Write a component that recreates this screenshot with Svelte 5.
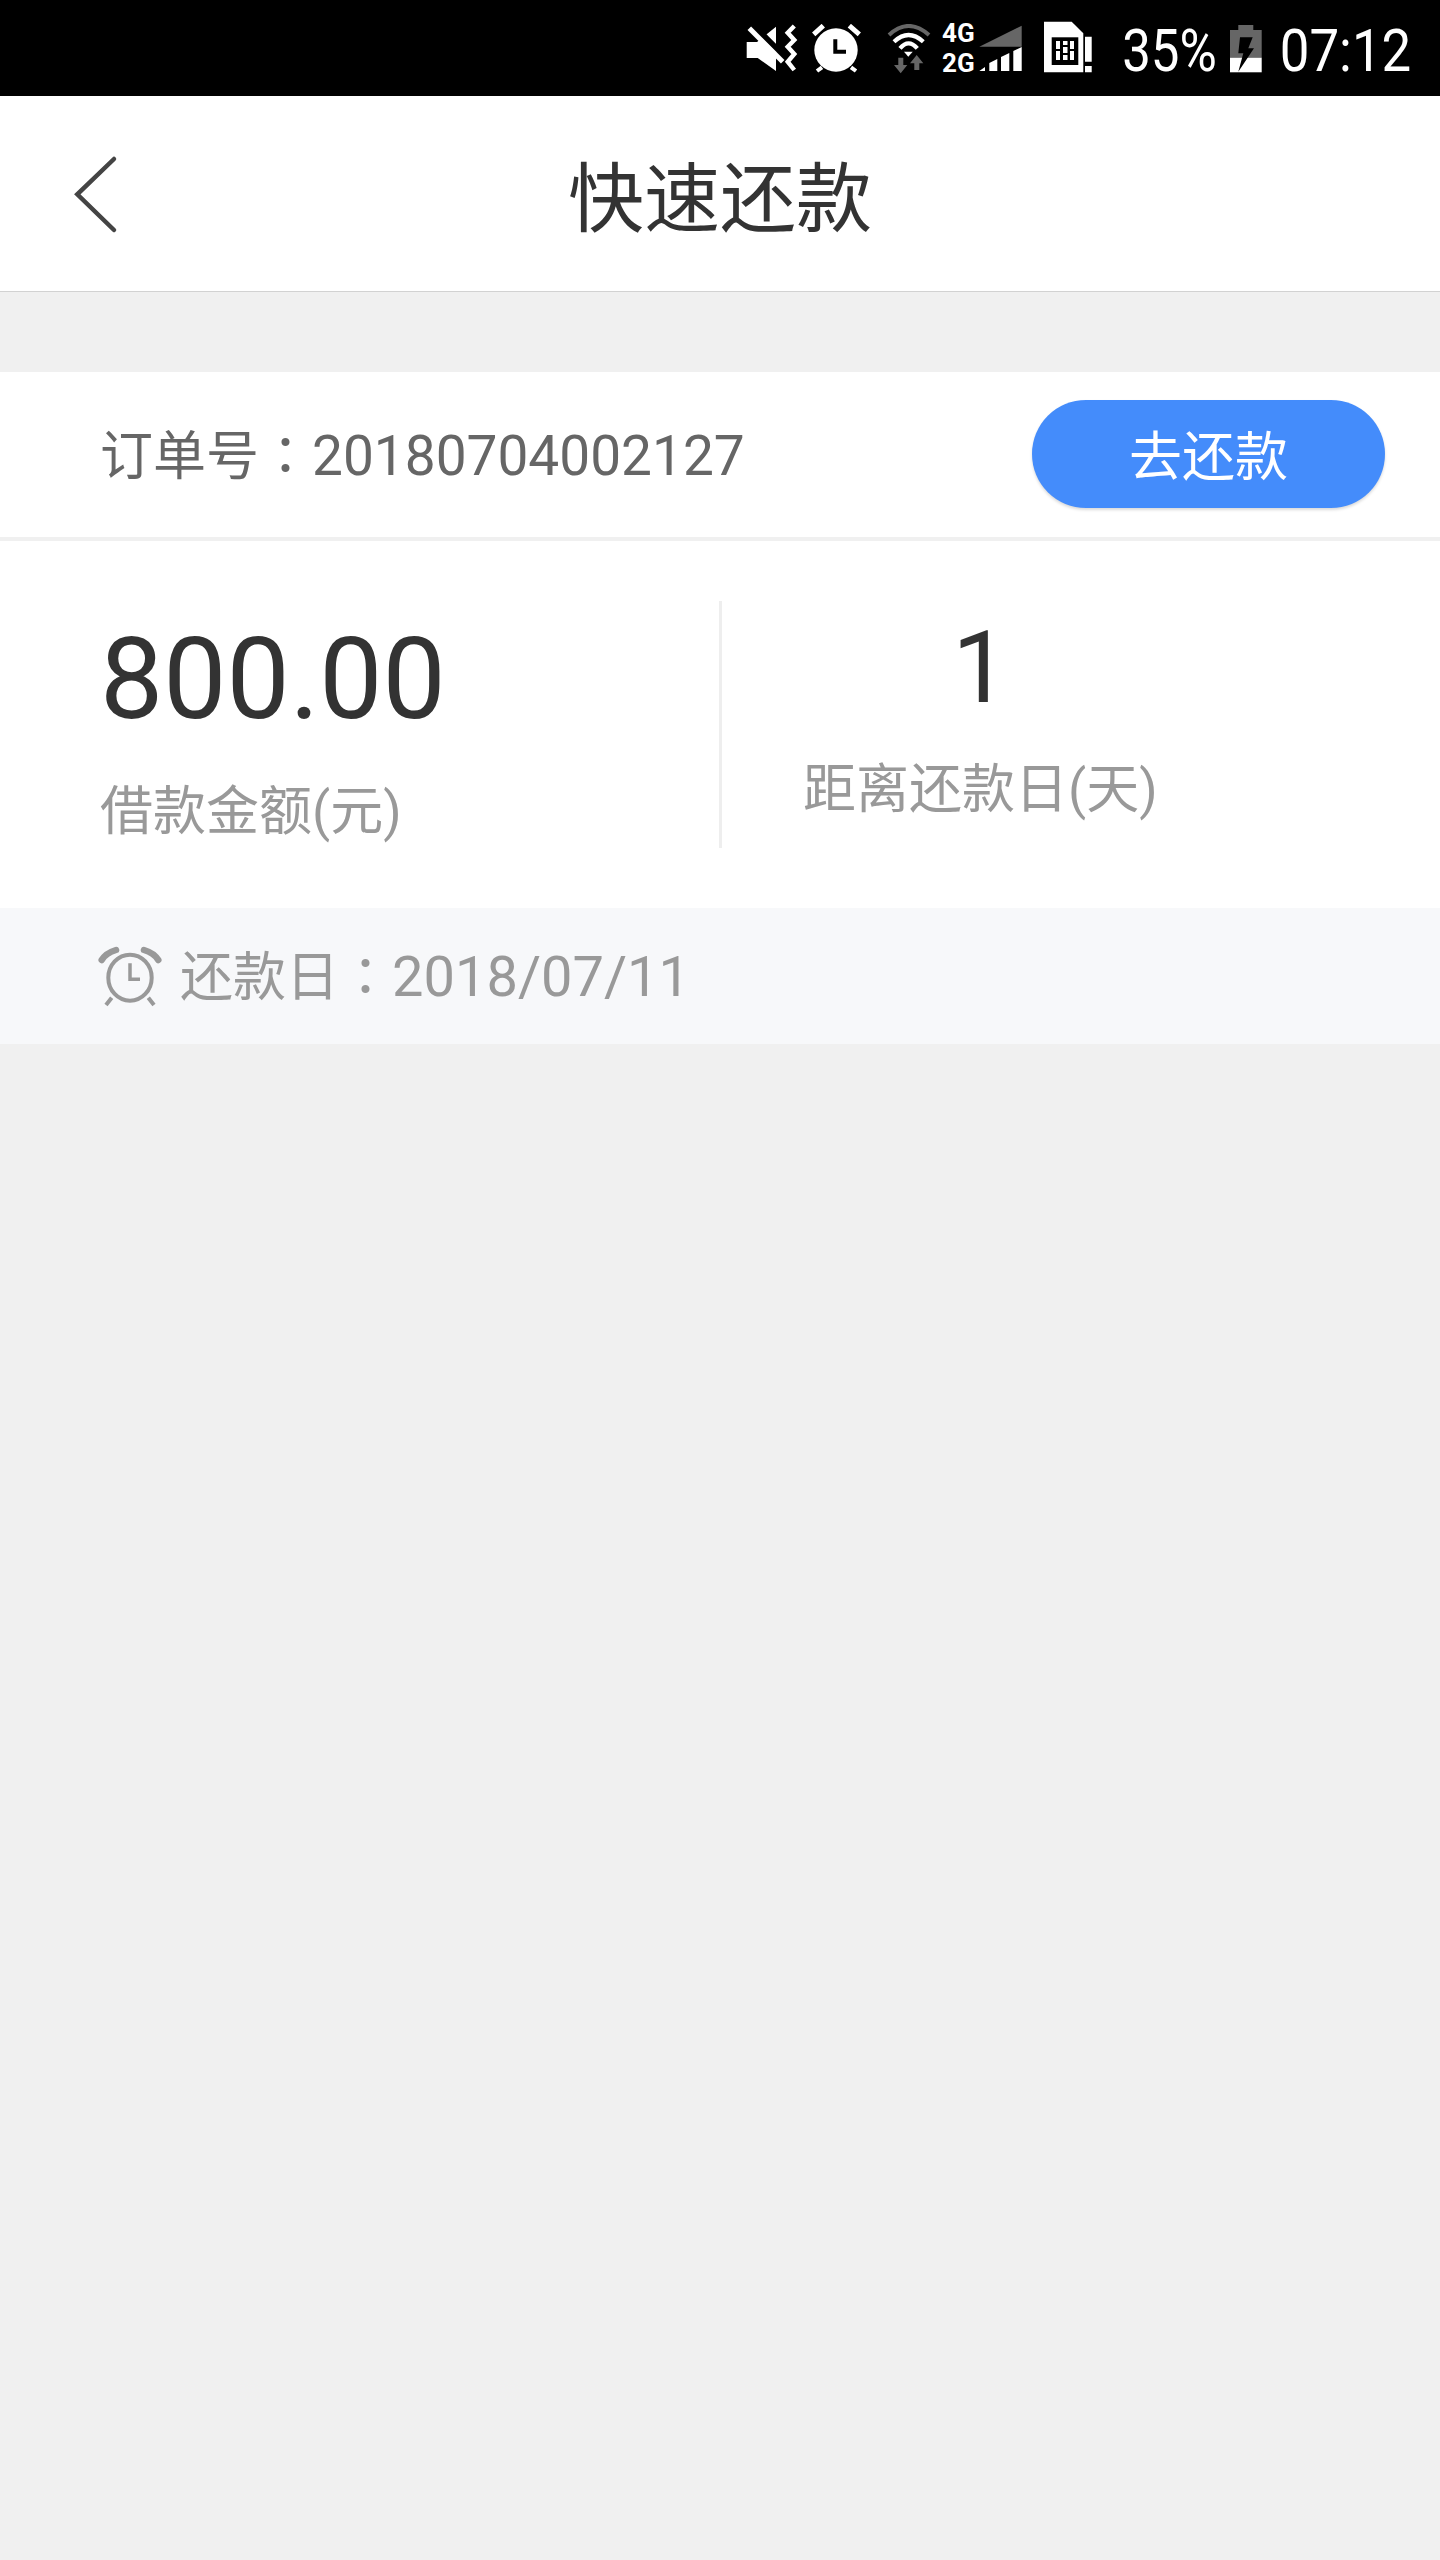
<script>
    let orderNo = '20180704002127';
    let amount = '800.00';
    let daysLeft = 1;
    let dueDate = '2018/07/11';
</script>

<div class="page">
    <div class="statusbar">
        <!-- mute + vibrate -->
        <svg class="ic mute" width="52" height="50" viewBox="0 0 52 50">
            <path d="M.7 18H11L30 2.700V47L11.700 34H.7z" fill="#fff"/>
            <path d="M7 1l33 33" stroke="#000" stroke-width="6"/>
            <path d="M3.300 4.300L36.700 37.700" stroke="#fff" stroke-width="5"/>
            <path d="M48.300 2l-6.600 6.700 6.600 7.300-6.600 6.700 6.600 7.300-6.600 7.700 6.600 8.300" fill="none" stroke="#fff" stroke-width="4.400"/>
        </svg>
        <!-- alarm -->
        <svg class="ic alarm" width="51" height="50" viewBox="0 0 51 50">
            <circle cx="25" cy="26" r="21.700" fill="#fff"/>
            <path d="M2.700 10.300L12.300 1.700M38.300 1.700l10 8.600" stroke="#fff" stroke-width="5"/>
            <path d="M6 47l5-3.700M40 43.300l5 3.700" stroke="#fff" stroke-width="4"/>
            <path d="M24.300 15.300V27.700H35" fill="none" stroke="#000" stroke-width="4"/>
        </svg>
        <!-- wifi -->
        <svg class="ic wifi" width="46" height="52" viewBox="0 0 46 52">
            <path d="M3 11Q22.500-7 43 11" fill="none" stroke="#666" stroke-width="4"/>
            <path d="M8 17.700Q22.500 4.300 37.300 17.700M14 24.300q8.500-10 17.300 0" fill="none" stroke="#fff" stroke-width="4.200"/>
            <path d="M18 27.700h8.700l-4.400 5z" fill="#fff"/>
            <path d="M12.300 33.700h5V41h4l-6.600 8.300L8 41h4.300zM28.300 46v-6.700H24l6.700-8.300 6.600 8.300h-4V46z" fill="#666"/>
        </svg>
        <!-- dual sim signal -->
        <svg class="ic net" width="80" height="62" viewBox="0 0 80 62">
            <text x="0" y="24.300" class="net-t">4G</text>
            <text x="0" y="54.300" class="net-t">2G</text>
            <path d="M37.300 28.700L79.700 7.700v21z" fill="#666"/>
            <path d="M37.300 53L43 49v4zM47.300 53v-8l8-4v12zM59 53V39l8.300-4v18zM71.300 53V33l8.400-4v24z" fill="#fff"/>
        </svg>
        <!-- sim alert -->
        <svg class="ic sim" width="52" height="52" viewBox="0 0 52 52">
            <path d="M0 .7h27.700l11.600 11.600v39H0z" fill="#fff"/>
            <rect x="7.700" y="16.300" width="26.600" height="27.700" fill="#000"/>
            <path d="M12 20h4v8h-4zM12 30h4v9h-4zM19 20h4.500v4h-4.500zM19 26h4.500v6h-4.500zM19 34h4.500v5h-4.500zM26 20h4v8h-4zM26 30h4v9h-4z" fill="#fff"/>
            <path d="M41 15.700h6.700v25H41zM41 45h6.700v6.300H41z" fill="#fff"/>
        </svg>
        <span class="stat pct">35%</span>
        <!-- battery charging -->
        <svg class="ic batt" width="32" height="48" viewBox="0 0 32 48">
            <path d="M8.300 0h15v5h8.400v27.700H0V5h8.300z" fill="#666"/>
            <path d="M0 32.700h31.700v14.600H0z" fill="#fff"/>
            <path d="M10 12.300h12.700l-4.400 11H24L8.300 46.700l5-18.400h-5z" fill="#000"/>
        </svg>
        <span class="stat clock">07:12</span>
    </div>

    <div class="nav">
        <svg class="back" width="44" height="80" viewBox="0 0 44 80">
            <path d="M40 5L3.300 40.300 40 76" fill="none" stroke="#444" stroke-width="4.500" stroke-linecap="round"/>
        </svg>
        <div class="title">快速还款</div>
    </div>

    <div class="order">
        <span class="order-no">订单号<span class="colon">：</span><span class="num">{orderNo}</span></span>
        <button class="pay">去还款</button>
    </div>

    <div class="stats">
        <div class="stat-left">
            <div class="amount">{amount}</div>
            <div class="label">借款金额(元)</div>
        </div>
        <div class="stat-right">
            <div class="days">{daysLeft}</div>
            <div class="label">距离还款日(天)</div>
        </div>
    </div>

    <div class="due">
        <svg class="due-ic" width="64" height="63" viewBox="0 0 64 63">
            <ellipse cx="32" cy="32.700" rx="21.700" ry="23" fill="none" stroke="#999" stroke-width="4"/>
            <path d="M3.700 15Q8 8 18 5M46 5Q56 8 60.300 15" fill="none" stroke="#999" stroke-width="6.500" stroke-linecap="round"/>
            <path d="M13.700 52.700L8 60M50.300 52.700L56 60" stroke="#999" stroke-width="4"/>
            <path d="M32 18.300V34.300H42" fill="none" stroke="#999" stroke-width="3.500"/>
        </svg>
        <span class="due-text">还款日<span class="colon">：</span><span class="num">{dueDate}</span></span>
    </div>
</div>

<style>
    :global(body) {
        margin: 0;
    }

    .page {
        height: 2560px;
        background: #f0f0f0;
        font-family: Roboto, 'Noto Sans CJK SC', sans-serif;
        overflow: hidden;
    }

    .statusbar {
        height: 96px;
        background: #000;
        display: flex;
        align-items: flex-start;
        justify-content: flex-end;
        padding-right: 29px;
        color: #fff;
    }

    .ic {
        display: block;
        flex: none;
    }

    .mute { margin-top: 24px; }
    .alarm { margin: 24px 0 0 13px; }
    .wifi { margin: 24px 0 0 24px; }
    .net { margin: 18px 0 0 10px; }
    .sim { margin: 21px 0 0 22px; }
    .batt { margin: 25px 0 0 13px; }

    .net-t {
        font-family: Roboto, sans-serif;
        font-size: 26px;
        font-weight: 700;
        fill: #fff;
    }

    .stat {
        display: flex;
        justify-content: center;
        font-size: 60px;
        line-height: 102px;
        flex: none;
    }

    .pct { width: 95px; margin-left: 26px; transform: scaleX(0.85); }
    .clock { width: 131px; margin-left: 18px; transform: scaleX(0.88); }

    .nav {
        height: 195px;
        background: #fff;
        border-bottom: 1px solid #d2d2d2;
        display: flex;
        align-items: center;
        justify-content: center;
        position: relative;
    }

    .back {
        position: absolute;
        left: 74px;
        top: 58px;
        filter: blur(0.5px);
    }

    .title {
        font-size: 76px;
        color: #333;
        padding-bottom: 2px;
    }

    .order {
        margin-top: 80px;
        height: 165px;
        background: #fff;
        display: flex;
        align-items: center;
        justify-content: space-between;
        padding: 0 55px 0 100px;
        border-bottom: 4px solid #f0f0f0;
    }

    .order-no {
        font-size: 53px;
        color: #666;
        margin-bottom: 6px;
    }

    .colon {
        font-family: 'Noto Sans CJK TC', sans-serif;
    }

    .num {
        font-size: 55px;
    }

    .pay {
        width: 353px;
        height: 108px;
        border: none;
        border-radius: 54px;
        background: #448cfb;
        color: #fff;
        font-family: inherit;
        font-size: 53px;
        box-shadow: 0 2px 3px rgba(0, 0, 0, 0.15);
        padding: 0 0 2px;
        margin-bottom: 2px;
    }

    .stats {
        height: 367px;
        background: #fff;
        display: flex;
        align-items: center;
    }

    .stat-left {
        width: 722px;
        height: 247px;
        padding-left: 100px;
        box-sizing: border-box;
        border-right: 3px solid #eee;
    }

    .stat-right {
        height: 247px;
        margin-left: 81px;
        text-align: center;
    }

    .amount {
        font-size: 112.500px;
        line-height: 130px;
        color: #333;
        padding-top: 14px;
        margin-bottom: 32px;
    }

    .days {
        font-size: 100px;
        line-height: 130px;
        color: #333;
        padding-top: 2px;
        margin-bottom: 22px;
    }

    .label {
        font-size: 53px;
        line-height: 70px;
        color: #999;
    }

    .due {
        height: 136px;
        background: #f7f8fa;
        display: flex;
        align-items: center;
        gap: 18px;
        padding-left: 98px;
        font-size: 53px;
        color: #999;
    }

    .due-ic {
        filter: blur(0.6px);
    }

    .due-text {
        margin-bottom: 6px;
    }

    .due .num {
        font-size: 56px;
    }
</style>
